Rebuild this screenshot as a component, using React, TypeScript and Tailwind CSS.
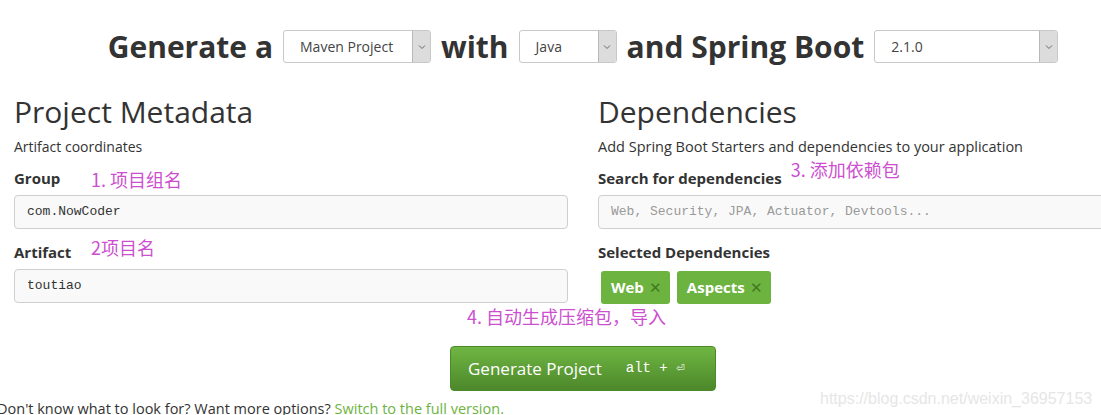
import React from 'react';

const head = "font-['Open_Sans',sans-serif]";
const body = "font-['Open_Sans','Liberation_Sans',sans-serif]";
const mono = "font-['Liberation_Mono',monospace]";
const note = "font-['Noto_Sans_CJK_SC',sans-serif] text-[18px] leading-[24px] text-[#cc4fd0]";

function FakeSelect({ label, width }: { label: string; width: string }) {
  return (
    <div className={`${width} h-[33px] flex border border-[#c8c8c8] rounded-[3px] bg-white overflow-hidden`}>
      <div className={`flex-1 flex items-center pl-4 text-[14px] text-[#444] ${body}`}>{label}</div>
      <div className="w-[18px] bg-[#dcdcdc] border-l border-[#b8b8b8] flex items-center justify-center">
        <svg width="8" height="6" viewBox="0 0 8 6">
          <path d="M1 1.5 L4 4.5 L7 1.5" fill="none" stroke="#666" strokeWidth="1" />
        </svg>
      </div>
    </div>
  );
}

function Field({ value, placeholder }: { value?: string; placeholder?: string }) {
  return (
    <div className={`h-[34px] bg-[#f9f9f9] border border-[#cfcfcf] rounded-[4px] flex items-center px-3 text-[13px] ${mono} ${value ? 'text-[#333]' : 'text-[#999]'}`}>
      {value ?? placeholder}
    </div>
  );
}

function Tag({ label }: { label: string }) {
  return (
    <div className={`h-[33px] bg-[#6db33f] rounded-[3px] flex items-center pl-[10px] pr-[8px] gap-[5px] text-white text-[15px] font-bold ${body}`}>
      <span>{label}</span>
      <span className="text-[#3f7a22] text-[15px] font-normal leading-none">✕</span>
    </div>
  );
}

export default function App() {
  return (
    <div className={`w-[1101px] h-[415px] overflow-hidden bg-white text-[#333] relative ${body}`}>
      {/* top line */}
      <div className="w-[1170px] -ml-[2px] flex justify-center items-center gap-[10px] pt-[30px] h-[63px]">
        <span className={`${head} text-[30px] font-bold text-[#333]`}>Generate a</span>
        <FakeSelect label="Maven Project" width="w-[148px]" />
        <span className={`${head} text-[30px] font-bold text-[#333]`}>with</span>
        <FakeSelect label="Java" width="w-[98px]" />
        <span className={`${head} text-[30px] font-bold text-[#333]`}>and Spring Boot</span>
        <FakeSelect label="2.1.0" width="w-[184px]" />
      </div>

      <div className="grid grid-cols-[554px_554px] gap-[30px] pl-[14px] mt-[29px]">
        {/* left */}
        <div>
          <h2 className={`${head} text-[30px] leading-[40px] text-[#333]`}>Project Metadata</h2>
          <p className="text-[14px] mt-[5px] leading-[20px]">Artifact coordinates</p>
          <div className="flex items-end h-[26px] mt-[6px]">
            <span className="text-[15px] font-bold w-[77px]">Group</span>
            <span className={`${note} relative top-[2px]`}>1. 项目组名</span>
          </div>
          <div className="mt-[6px]">
            <Field value="com.NowCoder" />
          </div>
          <div className="flex items-end h-[26px] mt-[8px]">
            <span className="text-[15px] font-bold w-[77px]">Artifact</span>
            <span className={`${note} relative -top-[4px]`}>2项目名</span>
          </div>
          <div className="mt-[6px]">
            <Field value="toutiao" />
          </div>
        </div>

        {/* right */}
        <div>
          <h2 className={`${head} text-[30px] leading-[40px] text-[#333]`}>Dependencies</h2>
          <p className="text-[14.5px] mt-[5px] leading-[20px]">Add Spring Boot Starters and dependencies to your application</p>
          <div className="flex items-end h-[26px] mt-[6px]">
            <span className="text-[15px] font-bold">Search for dependencies</span>
            <span className={`${note} ml-[9px] relative -top-[8px]`}>3. 添加依赖包</span>
          </div>
          <div className="mt-[6px]">
            <Field placeholder="Web, Security, JPA, Actuator, Devtools..." />
          </div>
          <div className="h-[26px] mt-[8px] flex items-end">
            <span className="text-[15px] font-bold">Selected Dependencies</span>
          </div>
          <div className="flex gap-[7px] mt-[8px] pl-[3px]">
            <Tag label="Web" />
            <Tag label="Aspects" />
          </div>
        </div>
      </div>

      <div className="pl-[467px]">
        <span className={note}>4. 自动生成压缩包，导入</span>
      </div>

      <div className="w-[1170px] -ml-[2px] flex justify-center mt-[16px]">
        <div className="h-[45px] w-[266px] rounded-[4px] border border-[#4b8a2a] bg-gradient-to-b from-[#6fb642] to-[#4d882b] flex items-center pl-[17px] gap-[24px] text-white">
          <span className="text-[17px]">Generate Project</span>
          <span className={`${mono} text-[14px]`}>alt + ⏎</span>
        </div>
      </div>

      <p className="text-[14.5px] leading-[20px] -ml-[3px] mt-[8px] whitespace-nowrap">
        Don't know what to look for? Want more options? <span className="text-[#6db33f]">Switch to the full version.</span>
      </p>

      <span className="absolute left-[820px] top-[387px] text-[16px] text-[#e6e6e6] font-['Liberation_Sans',sans-serif]">https://blog.csdn.net/weixin_36957153</span>
    </div>
  );
}
